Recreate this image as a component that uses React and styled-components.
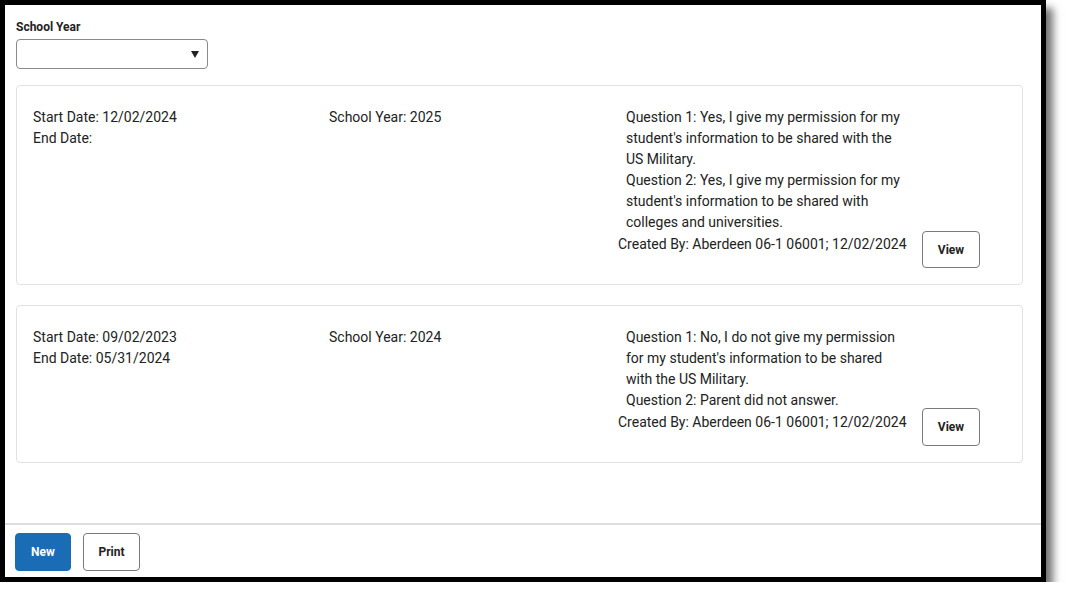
import React from "react";
import styled, { createGlobalStyle } from "styled-components";

const Global = createGlobalStyle`
  html, body { margin: 0; padding: 0; background: #fff; }
  body { font-family: Roboto, "Liberation Sans", Arial, sans-serif; color: #222; }
  * { box-sizing: border-box; }
`;

const Frame = styled.div`
  width: 1046px;
  height: 582px;
  border: 5px solid #000;
  background: #fff;
  box-shadow: 7px 8px 8px rgba(0, 0, 0, 0.55);
  display: flex;
  flex-direction: column;
`;

const Content = styled.div`
  flex: 1;
  padding: 15px 18px 0 11px;
  display: flex;
  flex-direction: column;
`;

const Label = styled.label`
  font-size: 12px;
  font-weight: 700;
  line-height: 14px;
  color: #222;
`;

const Select = styled.div`
  margin-top: 5px;
  width: 192px;
  height: 30px;
  border: 1px solid #8a8a8a;
  border-radius: 4px;
  display: flex;
  align-items: center;
  justify-content: flex-end;
  padding-right: 8px;
`;

const Caret = styled.span`
  width: 0;
  height: 0;
  border-left: 4.5px solid transparent;
  border-right: 4.5px solid transparent;
  border-top: 7px solid #222;
`;

const Cards = styled.div`
  margin-top: 16px;
  display: flex;
  flex-direction: column;
  gap: 20px;
`;

const Card = styled.div`
  border: 1px solid #e2e2e2;
  border-radius: 4px;
  padding: 21px 16px 16px 16px;
  display: grid;
  grid-template-columns: 296px 289px 1fr;
  font-size: 14px;
  line-height: 21px;
  color: #222;
`;

const Col = styled.div`
  display: flex;
  flex-direction: column;
`;

const Questions = styled.div`
  padding-left: 8px;
  width: 290px;
`;

const MetaRow = styled.div`
  display: flex;
  align-items: flex-start;
`;

const CreatedBy = styled.div`
  width: 304px;
  padding-top: 1px;
`;

const Button = styled.button`
  font-family: Roboto, "Liberation Sans", Arial, sans-serif;
  font-size: 12px;
  font-weight: 700;
  height: ${(p) => p.$h || 38}px;
  margin-top: ${(p) => p.$mt || 0}px;
  padding: 0;
  width: ${(p) => p.$w || 58}px;
  border-radius: 4px;
  cursor: pointer;
  border: 1px solid ${(p) => (p.$primary ? "#1a6db4" : "#7a7a7a")};
  background: ${(p) => (p.$primary ? "#1a6db4" : "#fff")};
  color: ${(p) => (p.$primary ? "#fff" : "#222")};
`;

const Footer = styled.div`
  border-top: 2px solid #dedede;
  padding: 8px 10px 6px 10px;
  display: flex;
  gap: 12px;
`;

const records = [
  {
    start: "12/02/2024",
    end: "",
    year: "2025",
    questions: [
      "Question 1: Yes, I give my permission for my student's information to be shared with the US Military.",
      "Question 2: Yes, I give my permission for my student's information to be shared with colleges and universities.",
    ],
    created: "Created By: Aberdeen 06-1 06001; 12/02/2024",
    btnH: 37,
    btnMt: -2,
  },
  {
    start: "09/02/2023",
    end: "05/31/2024",
    year: "2024",
    questions: [
      "Question 1: No, I do not give my permission for my student's information to be shared with the US Military.",
      "Question 2: Parent did not answer.",
    ],
    created: "Created By: Aberdeen 06-1 06001; 12/02/2024",
    btnH: 38,
    btnMt: -3,
  },
];

export default function App() {
  return (
    <>
      <Global />
      <Frame>
        <Content>
          <Label>School Year</Label>
          <Select>
            <Caret />
          </Select>
          <Cards>
            {records.map((r, i) => (
              <Card key={i}>
                <Col>
                  <div>Start Date: {r.start}</div>
                  <div>End Date: {r.end}</div>
                </Col>
                <Col>
                  <div>School Year: {r.year}</div>
                </Col>
                <Col>
                  <Questions>
                    {r.questions.map((q, j) => (
                      <div key={j}>{q}</div>
                    ))}
                  </Questions>
                  <MetaRow>
                    <CreatedBy>{r.created}</CreatedBy>
                    <Button $h={r.btnH} $mt={r.btnMt}>View</Button>
                  </MetaRow>
                </Col>
              </Card>
            ))}
          </Cards>
        </Content>
        <Footer>
          <Button $primary $w={56}>New</Button>
          <Button $w={57}>Print</Button>
        </Footer>
      </Frame>
    </>
  );
}
